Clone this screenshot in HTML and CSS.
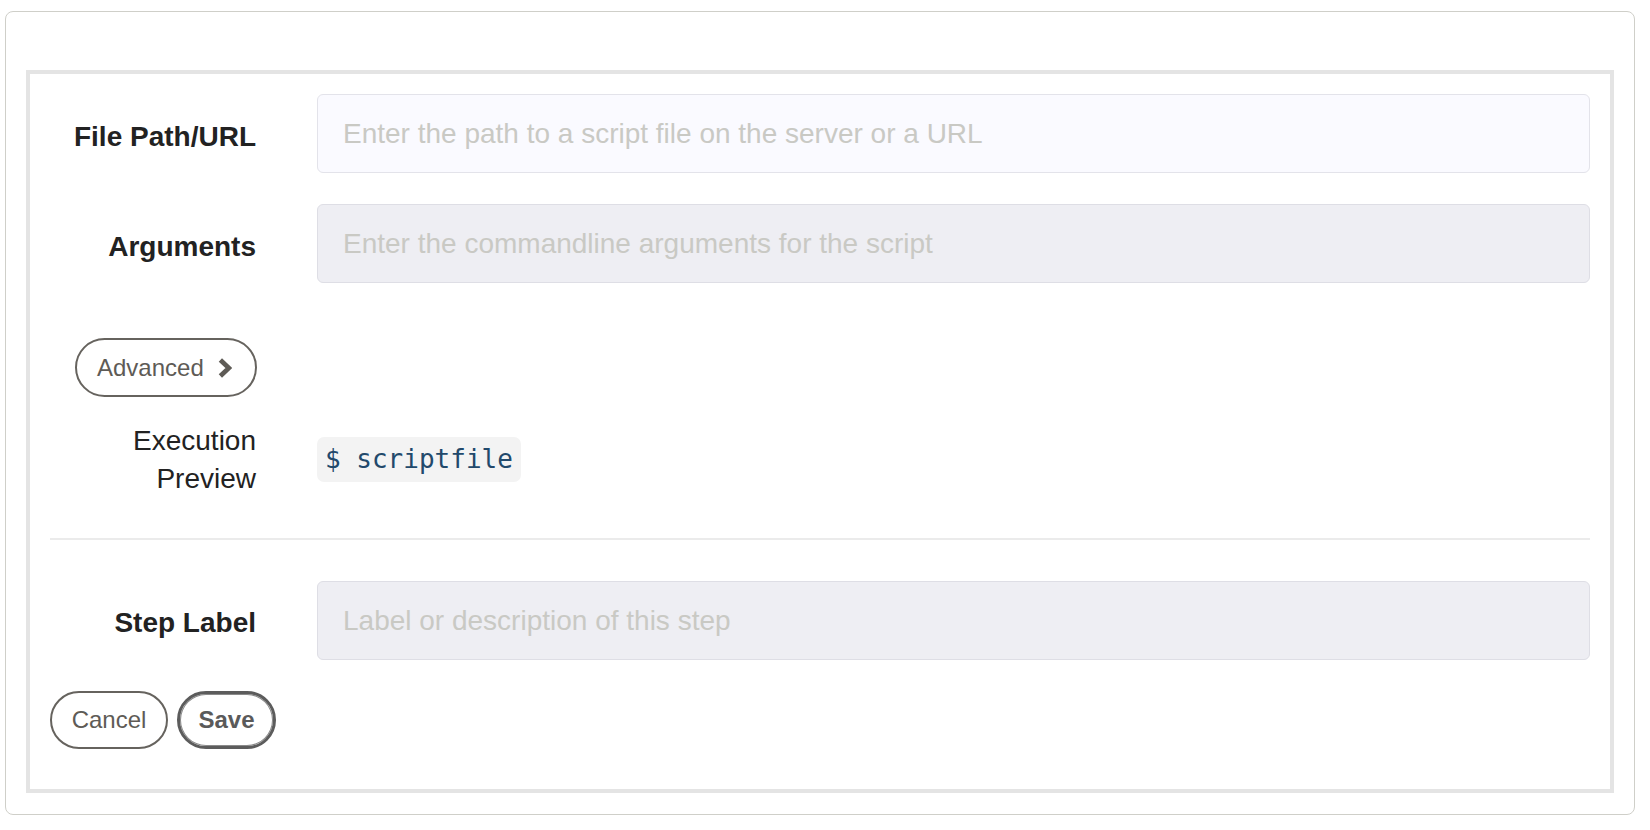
FILE: index.html
```html
<!DOCTYPE html>
<html>
<head>
<meta charset="utf-8">
<link rel="stylesheet" href="styles.css">
</head>
<body>
<div class="page">
  <div class="card">
    <div class="inner">
      <div class="row row-first">
        <label class="lbl bold">File Path/URL</label>
        <div class="field"><input class="input input-focus" type="text" placeholder="Enter the path to a script file on the server or a URL"></div>
      </div>
      <div class="row row-args">
        <label class="lbl bold">Arguments</label>
        <div class="field"><input class="input" type="text" placeholder="Enter the commandline arguments for the script"></div>
      </div>
      <div class="adv-row">
        <button class="btn btn-adv">Advanced
          <svg class="chev" width="15" height="22" viewBox="0 0 15 22"><polyline points="2.5,2.5 11.5,11 2.5,19.5" fill="none" stroke="#5e5b56" stroke-width="5"/></svg>
        </button>
      </div>
      <div class="row row-exec">
        <div class="lbl lbl-exec">Execution<br>Preview</div>
        <div class="field field-code"><code class="code">$ scriptfile</code></div>
      </div>
      <div class="sep"></div>
      <div class="row row-step">
        <label class="lbl bold">Step Label</label>
        <div class="field"><input class="input" type="text" placeholder="Label or description of this step"></div>
      </div>
      <div class="actions">
        <button class="btn btn-cancel">Cancel</button>
        <button class="btn btn-save">Save</button>
      </div>
    </div>
  </div>
</div>
</body>
</html>
```
FILE: styles.css
```css
* { box-sizing: border-box; }
html, body { margin: 0; padding: 0; background: #fff; }
body { font-family: "Liberation Sans", Arial, sans-serif; color: #222; }

.page { padding: 11px 15px 0 5px; }

.card {
  width: 1630px;
  height: 804px;
  border: 1px solid #cfcfc9;
  border-radius: 8px;
  padding: 58px 20px 21px 20px;
  display: flex;
}

.inner {
  flex: 1;
  border: 4px solid #e4e4e4;
  padding: 20px 20px 40px 20px;
  display: flex;
  flex-direction: column;
}
.inner > * { flex-shrink: 0; }

.row {
  display: grid;
  grid-template-columns: 236px 1fr;
  align-items: center;
}
.row-args { margin-top: 31px; }
.row-exec { margin-top: 25px; align-items: start; }
.row-step { margin-top: 41px; }

.lbl {
  text-align: right;
  padding-right: 30px;
  font-size: 28px;
  line-height: 40px;
  color: #222;
}
.bold { font-weight: bold; padding-top: 7px; }
.row-step .bold { padding-top: 5px; }
.lbl-exec { line-height: 38px; font-weight: normal; }

.field { padding-left: 31px; }
.field-code { padding-top: 15px; }

.input {
  display: block;
  width: 100%;
  height: 79px;
  border: 1px solid #dedee5;
  border-radius: 6px;
  background: #eeeef3;
  padding: 0 25px;
  font-family: "Liberation Sans", Arial, sans-serif;
  font-size: 28px;
  color: #333;
  outline: none;
}
.input-focus { background: #fafaff; border-color: #e3e3ea; }
.input::placeholder { color: #c9c9c4; opacity: 1; }

.adv-row { margin-top: 55px; padding-left: 25px; display: flex; }

.btn {
  font-family: "Liberation Sans", Arial, sans-serif;
  font-size: 24px;
  background: #fff;
  border: 2px solid #66635e;
  border-radius: 30px;
  color: #5e5b56;
  cursor: pointer;
  display: inline-flex;
  align-items: center;
  justify-content: center;
}
.btn-adv {
  width: 182px;
  height: 59px;
  padding: 0 23px 0 20px;
  justify-content: flex-start;
}
.chev { margin-left: 14px; display: block; }

.code {
  display: inline-block;
  font-family: "DejaVu Sans Mono", "Liberation Mono", monospace;
  font-size: 26px;
  line-height: 45px;
  height: 45px;
  padding: 0 8px;
  background: #f3f3f3;
  border-radius: 7px;
  color: #22496b;
}

.sep {
  margin-top: 40px;
  height: 2px;
  background: #ebebeb;
}

.actions { margin-top: 31px; display: flex; gap: 9px; }
.btn-cancel { width: 118px; height: 58px; padding: 0; }
.btn-save {
  width: 99px;
  height: 58px;
  padding: 0;
  font-weight: bold;
  color: #5a5a5a;
  border: 3px solid #5c5c5c;
  box-shadow: inset 0 0 0 1px #8a8a8a;
}
```
